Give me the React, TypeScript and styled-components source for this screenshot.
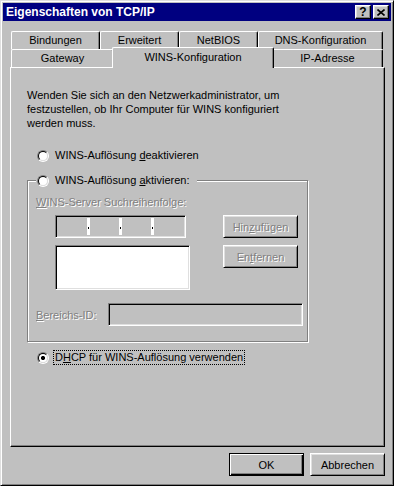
import styled, { createGlobalStyle } from "styled-components";

const GlobalStyle = createGlobalStyle`
  html, body {
    margin: 0;
    padding: 0;
    background: #c0c0c0;
  }
  body {
    font-family: "Liberation Sans", Arial, sans-serif;
    font-size: 11px;
    color: #000;
  }
`;

const Window = styled.div`
  width: 394px;
  height: 486px;
  box-sizing: border-box;
  background: #c0c0c0;
  border: 1px solid;
  border-color: #dfdfdf #000 #000 #dfdfdf;
  box-shadow: inset 1px 1px #fff, inset -1px -1px #808080;
  padding: 2px;
  display: flex;
  flex-direction: column;
`;

const TitleBar = styled.div`
  height: 18px;
  background: #000080;
  display: flex;
  align-items: center;
  padding: 0 2px 0 3px;
  flex-shrink: 0;
`;

const Title = styled.div`
  flex: 1;
  color: #fff;
  font-weight: bold;
  font-size: 12px;
`;

const TitleButton = styled.div`
  width: 16px;
  height: 14px;
  box-sizing: border-box;
  background: #c0c0c0;
  border: 1px solid;
  border-color: #fff #000 #000 #fff;
  box-shadow: inset -1px -1px #808080, inset 1px 1px #dfdfdf;
  display: flex;
  align-items: center;
  justify-content: center;
  font-weight: bold;
  font-size: 12px;
  line-height: 12px;
  margin-left: 2px;
`;

const Body = styled.div`
  flex: 1;
  display: flex;
  flex-direction: column;
  padding: 10px 6px 7px 7px;
`;

const TabStrip = styled.div`
  display: flex;
  flex-direction: column;
  padding: 0 2px 0 1px;
`;

const TabRow = styled.div`
  display: flex;
  height: 18px;
`;

const Tab = styled.div<{ $w: number; $active?: boolean }>`
  width: ${(p) => p.$w}px;
  box-sizing: border-box;
  background: #c0c0c0;
  border-top: 1px solid #fff;
  border-left: 1px solid #fff;
  border-right: 1px solid #000;
  border-radius: 2px 2px 0 0;
  box-shadow: inset -1px 0 #808080;
  display: flex;
  align-items: center;
  justify-content: center;
  padding-bottom: 1px;
  ${(p) =>
    p.$active &&
    `
    position: relative;
    z-index: 1;
    height: 21px;
    margin: -2px -2px -1px -2px;
    width: ${p.$w + 4}px;
    padding-bottom: 2px;
  `}
`;

const Panel = styled.div`
  flex: 1;
  border: 1px solid;
  border-color: #fff #000 #000 #fff;
  box-shadow: inset -1px -1px #808080;
  padding: 20px 0 0 16px;
  display: flex;
  flex-direction: column;
  align-items: flex-start;
`;

const Intro = styled.p`
  margin: 0;
  line-height: 14px;
`;

const RadioRow = styled.div<{ $top?: number }>`
  display: flex;
  align-items: center;
  gap: 4px;
  margin-top: ${(p) => p.$top ?? 0}px;
  margin-left: 10px;
`;

const RadioCircle = styled.span<{ $checked?: boolean }>`
  width: 12px;
  height: 12px;
  box-sizing: border-box;
  border-radius: 50%;
  border: 1px solid;
  border-color: #808080 #fff #fff #808080;
  display: flex;
  align-items: center;
  justify-content: center;
  flex-shrink: 0;
  &::before {
    content: "";
    width: 10px;
    height: 10px;
    box-sizing: border-box;
    border-radius: 50%;
    border: 1px solid;
    border-color: #000 #dfdfdf #dfdfdf #000;
    background: ${(p) =>
      p.$checked
        ? "radial-gradient(circle, #000 0 2px, #fff 2.2px)"
        : "#fff"};
  }
`;

const RadioLabel = styled.span<{ $focus?: boolean }>`
  line-height: 13px;
  padding: 0 1px;
  border: 1px ${(p) => (p.$focus ? "dotted #000" : "solid transparent")};
  white-space: nowrap;
`;

const Group = styled.fieldset`
  margin: 10px 0 0;
  width: 281px;
  box-sizing: border-box;
  padding: 0 3px 15px 8px;
  border: 1px solid #808080;
  box-shadow: inset 1px 1px #fff, 1px 1px #fff;
  min-width: 0;
`;

const GroupLegend = styled.legend`
  display: flex;
  align-items: center;
  gap: 4px;
  padding: 0 5px 0 1px;
  background: #c0c0c0;
`;

const Disabled = styled.span`
  color: #808080;
  text-shadow: 1px 1px 0 #fff;
  line-height: 14px;
  white-space: nowrap;
`;

const ServerGrid = styled.div`
  display: grid;
  grid-template-columns: 135px 75px;
  grid-template-rows: 23px 45px;
  column-gap: 33px;
  row-gap: 7px;
  margin: 6px 0 0 19px;
  align-items: start;
`;

const Field = styled.div<{ $w: number; $h: number; $bg: string }>`
  width: ${(p) => p.$w}px;
  height: ${(p) => p.$h}px;
  box-sizing: border-box;
  background: ${(p) => p.$bg};
  border: 1px solid;
  border-color: #808080 #fff #fff #808080;
  box-shadow: inset 1px 1px #000, inset -1px -1px #dfdfdf;
`;

const IpField = styled(Field)`
  display: flex;
  padding: 2px;
`;

const IpSegment = styled.span`
  flex: 1;
`;

const IpDot = styled.span`
  width: 3px;
  background: #fff;
  position: relative;
  &::after {
    content: "";
    position: absolute;
    left: 1px;
    bottom: 6px;
    width: 1px;
    height: 2px;
    background: #000;
  }
`;

const Button = styled.div<{ $default?: boolean; $disabled?: boolean }>`
  width: 75px;
  height: 23px;
  box-sizing: border-box;
  background: #c0c0c0;
  display: flex;
  align-items: center;
  justify-content: center;
  white-space: nowrap;
  border: 1px solid;
  ${(p) =>
    p.$default
      ? `border-color: #000;
         box-shadow: inset 1px 1px #fff, inset -1px -1px #000, inset -2px -2px #808080;`
      : `border-color: #fff #000 #000 #fff;
         box-shadow: inset 1px 1px #dfdfdf, inset -1px -1px #808080;`}
  ${(p) =>
    p.$disabled &&
    `color: #808080;
     text-shadow: 1px 1px 0 #fff;`}
`;

const ScopeRow = styled.div`
  display: flex;
  align-items: center;
  margin-top: 13px;
`;

const ScopeLabel = styled(Disabled)`
  width: 72px;
`;

const ButtonRow = styled.div`
  display: flex;
  justify-content: flex-end;
  gap: 6px;
  margin-top: 6px;
`;

const CloseGlyph = () => (
  <svg width="8" height="7" viewBox="0 0 8 7">
    <path d="M0.5 0.5L7.5 6.5M7.5 0.5L0.5 6.5" stroke="#000" strokeWidth="1.6" />
  </svg>
);

const Radio = ({
  label,
  checked,
  focus,
  top,
}: {
  label: React.ReactNode;
  checked?: boolean;
  focus?: boolean;
  top?: number;
}) => (
  <RadioRow $top={top}>
    <RadioCircle $checked={checked} />
    <RadioLabel $focus={focus}>{label}</RadioLabel>
  </RadioRow>
);

const App = () => {
  return (
    <>
      <GlobalStyle />
      <Window>
        <TitleBar>
          <Title>Eigenschaften von TCP/IP</Title>
          <TitleButton>?</TitleButton>
          <TitleButton>
            <CloseGlyph />
          </TitleButton>
        </TitleBar>
        <Body>
          <TabStrip>
            <TabRow>
              <Tab $w={89}>Bindungen</Tab>
              <Tab $w={79}>Erweitert</Tab>
              <Tab $w={79}>NetBIOS</Tab>
              <Tab $w={125}>DNS-Konfiguration</Tab>
            </TabRow>
            <TabRow>
              <Tab $w={103}>Gateway</Tab>
              <Tab $w={158} $active>
                WINS-Konfiguration
              </Tab>
              <Tab $w={111}>IP-Adresse</Tab>
            </TabRow>
          </TabStrip>
          <Panel>
            <Intro>
              Wenden Sie sich an den Netzwerkadministrator, um
              <br />
              festzustellen, ob Ihr Computer für WINS konfiguriert
              <br />
              werden muss.
            </Intro>
            <Radio
              top={18}
              label={
                <>
                  WINS-Auflösung <u>d</u>eaktivieren
                </>
              }
            />
            <Group>
              <GroupLegend>
                <RadioCircle />
                <RadioLabel>
                  WINS-Auflösung <u>a</u>ktivieren:
                </RadioLabel>
              </GroupLegend>
              <div style={{ marginTop: 7 }}>
                <Disabled>
                  <u>W</u>INS-Server Suchreihenfolge:
                </Disabled>
              </div>
              <ServerGrid>
                <IpField $w={131} $h={23} $bg="#c0c0c0">
                  <IpSegment />
                  <IpDot />
                  <IpSegment />
                  <IpDot />
                  <IpSegment />
                  <IpDot />
                  <IpSegment />
                </IpField>
                <Button $disabled>
                  Hin<u>z</u>ufügen
                </Button>
                <Field $w={135} $h={45} $bg="#fff" />
                <Button $disabled>
                  En<u>t</u>fernen
                </Button>
              </ServerGrid>
              <ScopeRow>
                <ScopeLabel>
                  <u>B</u>ereichs-ID:
                </ScopeLabel>
                <Field $w={195} $h={23} $bg="#c0c0c0" />
              </ScopeRow>
            </Group>
            <Radio
              top={8}
              checked
              focus
              label={
                <>
                  D<u>H</u>CP für WINS-Auflösung verwenden
                </>
              }
            />
          </Panel>
          <ButtonRow>
            <Button $default>OK</Button>
            <Button>Abbrechen</Button>
          </ButtonRow>
        </Body>
      </Window>
    </>
  );
};

export default App;
